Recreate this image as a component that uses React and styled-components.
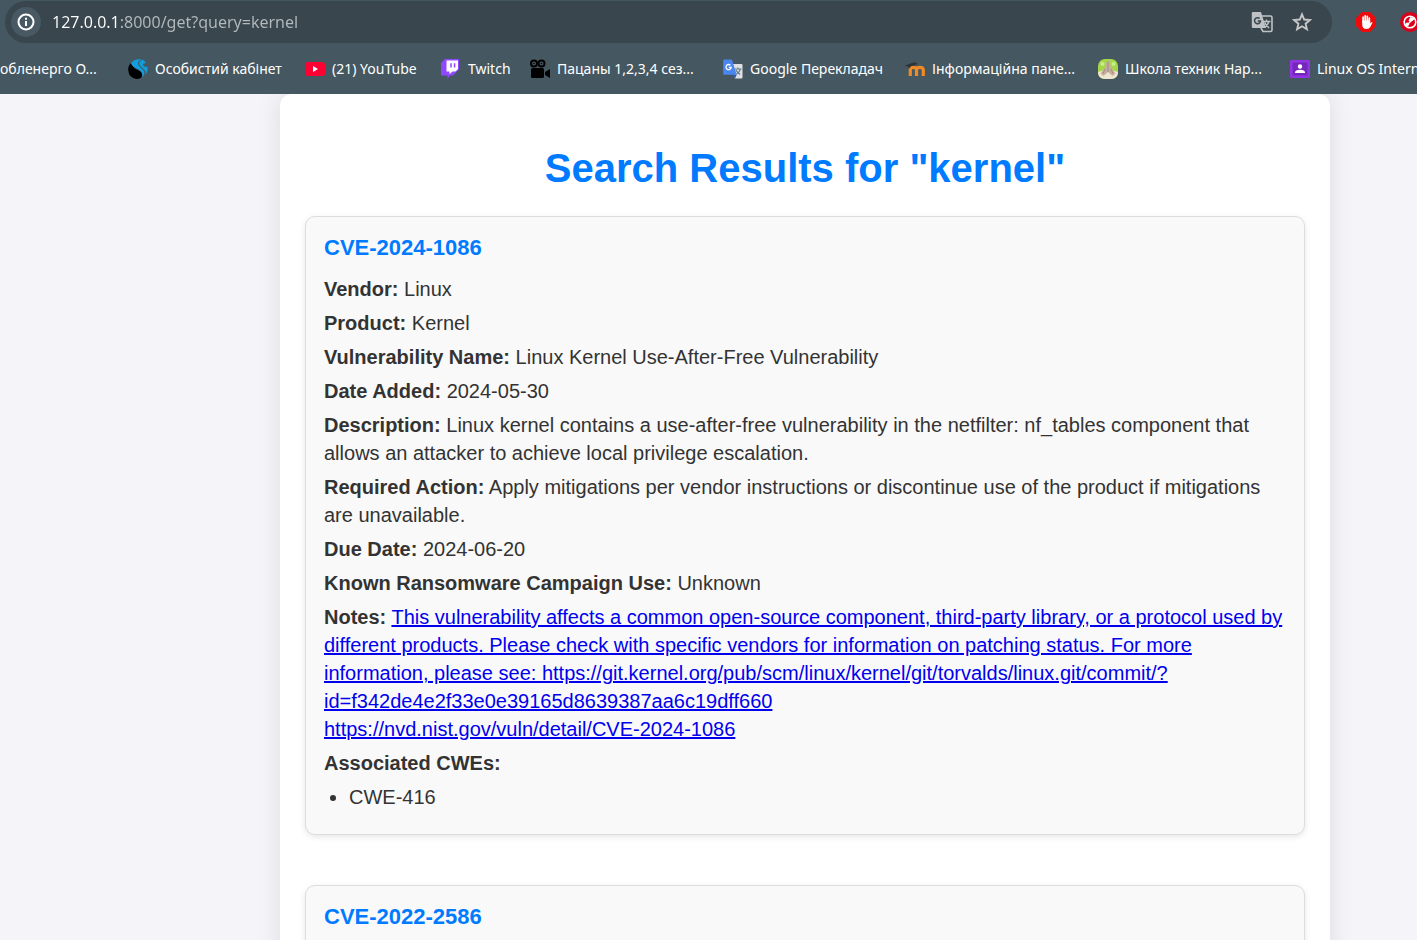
import React from "react";
import styled, { createGlobalStyle } from "styled-components";

const GlobalStyle = createGlobalStyle`
  * { box-sizing: border-box; }
  html { height: 100%; }
  body {
    margin: 0;
    height: 100%;
    overflow: hidden;
    background: #f4f4f9;
    color: #333;
    font-family: Arial, "Liberation Sans", sans-serif;
  }
  #root { height: 100%; }
`;

const Browser = styled.div`
  display: flex;
  flex-direction: column;
  height: 100%;
`;

const Chrome = styled.header`
  flex: none;
  height: 94px;
  background: #455760;
  color: #fff;
  font-family: "Segoe UI", "Noto Sans", sans-serif;
  overflow: hidden;
`;

const AddressRow = styled.div`
  display: flex;
  align-items: center;
  padding: 1px 0 0 5px;
  height: 43px;
`;

const AddressBar = styled.form`
  flex: 1;
  display: flex;
  align-items: center;
  height: 42px;
  padding: 0 10px 0 6px;
  border-radius: 21px;
  background: #39464d;
`;

const IconButton = styled.button`
  display: flex;
  align-items: center;
  justify-content: center;
  flex: none;
  width: ${(p) => p.$size || 40}px;
  height: ${(p) => p.$size || 40}px;
  padding: 0;
  border: 0;
  border-radius: 50%;
  background: ${(p) => (p.$filled ? "#485963" : "transparent")};
  color: ${(p) => (p.$filled ? "#fff" : "#c7c7c7")};
`;

const AddressInput = styled.input`
  flex: 1;
  min-width: 0;
  height: 30px;
  margin-left: 11px;
  padding: 0;
  border: 0;
  outline: 0;
  font-family: inherit;
  font-size: 16px;
  line-height: 30px;
  background: linear-gradient(to right, #fff 67px, #b3babd 67px);
  background-clip: text;
  -webkit-background-clip: text;
  color: transparent;
`;

const Extensions = styled.div`
  display: flex;
  flex: none;
  gap: 4px;
  width: 85px;
  padding-left: 14px;
  overflow: hidden;
`;

const Bookmarks = styled.nav`
  display: flex;
  align-items: center;
  height: 51px;
  overflow: hidden;
`;

const Bookmark = styled.a`
  display: flex;
  flex: none;
  align-items: center;
  gap: 7px;
  width: ${(p) => p.$width}px;
  color: #fff;
  font-size: 14px;
  line-height: 20px;
  white-space: nowrap;
  text-decoration: none;

  svg { flex: none; }
`;

const Page = styled.main`
  flex: 1;
  min-height: 0;
  overflow: hidden;
  padding: 0 87px 0 280px;
`;

const Container = styled.div`
  padding: 44px 25px;
  border-radius: 12px;
  background: #fff;
  box-shadow: 0 0 25px rgba(0, 0, 0, 0.1);
`;

const Title = styled.h1`
  margin: 0 0 18px;
  color: #007bff;
  font-size: 40px;
  line-height: 60px;
  text-align: center;
`;

const Card = styled.article`
  margin-bottom: 50px;
  padding: 17px 18px 23px;
  border: 1px solid #ddd;
  border-radius: 10px;
  background: #f9f9f9;
  box-shadow: 0 2px 6px rgba(0, 0, 0, 0.1);
`;

const CardTitle = styled.h2`
  margin: 0 0 13px;
  color: #007bff;
  font-size: 22px;
  line-height: 28px;
`;

const Field = styled.p`
  margin: 0 0 6px;
  font-size: 20px;
  line-height: 28px;
`;

const NotesLink = styled.a`
  color: #0000ee;
  white-space: pre-line;
`;

const CweList = styled.ul`
  margin: 0;
  padding-left: 25px;
  font-size: 20px;
  line-height: 28px;
`;

const InfoIcon = () => (
  <svg width="18" height="18" viewBox="0 0 18 18" fill="none" stroke="currentColor" strokeWidth="2">
    <circle cx="9" cy="9" r="7.5" />
    <path d="M9 8v5M9 4.7v2" />
  </svg>
);

const TranslateIcon = () => (
  <svg width="22" height="22" viewBox="0 0 22 22">
    <path d="M2 1h8l5 16H2q-1.200 0-1.200-1.200V2.200Q.8 1 2 1Z" fill="#bfc2c4" />
    <path d="M11 5h8.500q1.500 0 1.500 1.500v12.500q0 1.500-1.500 1.500H12l-2-3.500" fill="none" stroke="#bfc2c4" strokeWidth="1.600" />
    <path d="M12 10.500h7.500M15.500 8.500v2M18 10.500q-1.500 4-4.500 6M13.700 11.500q1.500 3 4.500 5.500" fill="none" stroke="#bfc2c4" strokeWidth="1.400" />
    <path d="M8.700 7.600a3 3 0 1 0 .8 2.500H6.600" fill="none" stroke="#39464d" strokeWidth="1.500" />
  </svg>
);

const StarIcon = () => (
  <svg width="20" height="20" viewBox="0 0 20 20" fill="none" stroke="#c7c7c7" strokeWidth="1.900">
    <path d="M10 2.300l2.200 5.200 5.700.5-4.300 3.700 1.300 5.600-4.900-3-4.900 3 1.300-5.600L2.100 8l5.700-.5Z" />
  </svg>
);

const StopHandIcon = () => (
  <svg width="20" height="20" viewBox="0 0 20 20">
    <path d="M6 0h8l6 6v8l-6 6H6l-6-6V6Z" fill="#ed0b0b" />
    <path d="M7.100 10V5.200M9.200 9V3.800M11.300 9V4.300M13.300 10V6" stroke="#fff" strokeWidth="1.700" strokeLinecap="round" />
    <path d="M6.200 8.500h8v3l1-1.200q1-.8 1.300.1l-2.200 4.600q-1 2-3.700 2-4.400 0-4.400-4.500Z" fill="#fff" />
  </svg>
);

const BlockerIcon = () => (
  <svg width="20" height="20" viewBox="0 0 20 20">
    <circle cx="10" cy="10" r="10" fill="#d9001b" />
    <circle cx="10" cy="10" r="5.800" fill="#d9001b" stroke="#fff" strokeWidth="1.600" />
    <path d="M8.500 8.500l2-3.500 4.500 1.500-2.500 2.500-2.500 1Z" fill="#fff" />
    <path d="M6 14L11 9" stroke="#fff" strokeWidth="1.200" />
    <circle cx="7.300" cy="12.300" r="1.800" fill="#fff" />
  </svg>
);

const SwirlIcon = () => (
  <svg width="20" height="20" viewBox="0 0 20 20">
    <path d="M3 4Q0 6.500.2 11 .8 19 8.500 20q5.500 0 5.700-4.300-.2-2.700-4.200-4.700-5.500-2.500-7-7Z" fill="#000" />
    <path d="M3 4.200Q6 .3 11 .2l3 .4Q9.500 2 10 5q.6 2.500 3.500 4.500 4.500 3.500 2 7.500-.6.800-1.200 1.200Q15.500 13 10 10.300 4 7.500 3 4.200Z" fill="#109fdc" />
    <path d="M14.800.7q-4.300 1.600-3.500 4.600.7 2 3.700 4.200 3.800 3 2.200 6.500 3.500-4 2-8.700-2 1.500-4-.8Q14 4 18 4.200 16.800 1.700 14.800.7Z" fill="#109fdc" />
  </svg>
);

const YouTubeIcon = () => (
  <svg width="20" height="20" viewBox="0 0 20 20">
    <rect y="3" width="20" height="14" rx="3" fill="#ff0033" />
    <path d="M8 7l5 3-5 3Z" fill="#fff" />
  </svg>
);

const TwitchIcon = () => (
  <svg width="20" height="20" viewBox="0 0 20 20">
    <path d="M4 0h14v10.500l-6 6h-3L6.500 20v-3.500H0V4Z" fill="#9146ff" />
    <path d="M5.500 1.500h11.500V10L14.500 12.500h-3L8.500 15.300v-2.800h-3Z" fill="#fff" />
    <path d="M10 4.200v4.300M13.600 4.200v4.300" stroke="#9146ff" strokeWidth="1.500" />
  </svg>
);

const CameraIcon = () => (
  <svg width="20" height="20" viewBox="0 0 20 20">
    <rect x="1" y="9" width="13" height="10" rx="1.500" />
    <path d="M15 13l5-3v9l-5-3Z" />
    <g fill="none" stroke="#000" strokeWidth="2">
      <circle cx="4" cy="4.500" r="3" />
      <circle cx="11.500" cy="4.500" r="3" />
    </g>
    <circle cx="4" cy="4.500" r=".8" />
    <circle cx="11.500" cy="4.500" r=".8" />
  </svg>
);

const GoogleTranslateIcon = () => (
  <svg width="20" height="20" viewBox="0 0 20 20">
    <path d="M8 5h10.500q1 0 1 1v12.500q0 1-1 1H12Z" fill="#dfe1e3" />
    <path d="M1.300.5h7.500l5 15.200H1.300Q.2 15.700.2 14.700V1.500Q.2.5 1.300.5Z" fill="#4a86f0" />
    <path d="M10.500 15.700h3.300L12 19.500Z" fill="#2559bd" />
    <path d="M11.500 10h7M15 8.500V10M17.500 10q-1.200 3.500-4 5.200M13 11q1.400 3 4.200 4.500" fill="none" stroke="#627d87" strokeWidth="1.200" />
    <path d="M7.400 6.200A2.600 2.600 0 1 0 8.200 8.300H5.800" fill="none" stroke="#fff" strokeWidth="1.300" />
  </svg>
);

const MoodleIcon = () => (
  <svg width="20" height="20" viewBox="0 0 20 20">
    <path d="M5.300 17v-6q0-2.700 3.100-2.700t3.100 2.700v6M11.500 11q0-2.700 3.400-2.700T18.300 11v6" fill="none" stroke="#f08a24" strokeWidth="3.200" />
    <path d="M0 6.500l9-3.300 3.500 1-3 2.300Q5.500 6.300 4.500 9.500L3 7.500l-2 .3Z" fill="#303437" />
    <path d="M1.200 7Q.2 9.500 1 13.500" fill="none" stroke="#555" />
  </svg>
);

const SchoolIcon = () => (
  <svg width="20" height="20" viewBox="0 0 20 20">
    <rect width="20" height="20" rx="7" fill="#a5d64c" />
    <path d="M0 13q10-4 20 0 0 7-7 7H7q-7 0-7-7Z" fill="#efe6cf" />
    <path d="M9.500 1.500Q7.500 5 7 9L2.500 14.500l3 2.500L10 13l4.500 4 3-2.500L13 9Q12.500 4.500 10.500 1.500Z" fill="#c9afa2" />
    <path d="M10 2.500V13M7 10l-2 4.500M13 10l2 4.500" stroke="#8d7b72" strokeWidth=".7" />
    <circle cx="4.500" cy="5" r="2" fill="#c9ed86" />
    <circle cx="15.500" cy="5" r="2" fill="#c9ed86" />
  </svg>
);

const ClassroomIcon = () => (
  <svg width="20" height="20" viewBox="0 0 20 20">
    <rect y="1" width="20" height="18" rx="1.500" fill="#9334e6" />
    <rect x="2.500" y="3.500" width="15" height="13" fill="#7627bb" />
    <circle cx="10" cy="7.500" r="2.200" fill="#fff" />
    <path d="M5 14v-1.200Q6 10.700 10 10.700t5 2.100V14Z" fill="#fff" />
  </svg>
);

const bookmarks = [
  { label: "обленерго О...", width: 128 },
  { label: "Особистий кабінет", width: 177, Icon: SwirlIcon },
  { label: "(21) YouTube", width: 136, Icon: YouTubeIcon },
  { label: "Twitch", width: 89, Icon: TwitchIcon },
  { label: "Пацаны 1,2,3,4 сез...", width: 193, Icon: CameraIcon },
  { label: "Google Перекладач", width: 182, Icon: GoogleTranslateIcon },
  { label: "Інформаційна пане...", width: 193, Icon: MoodleIcon },
  { label: "Школа техник Нар...", width: 192, Icon: SchoolIcon },
  { label: "Linux OS Internals", width: 192, Icon: ClassroomIcon },
];

const results = [
  {
    id: "CVE-2024-1086",
    fields: [
      ["Vendor", "Linux"],
      ["Product", "Kernel"],
      ["Vulnerability Name", "Linux Kernel Use-After-Free Vulnerability"],
      ["Date Added", "2024-05-30"],
      ["Description", "Linux kernel contains a use-after-free vulnerability in the netfilter: nf_tables component that allows an attacker to achieve local privilege escalation."],
      ["Required Action", "Apply mitigations per vendor instructions or discontinue use of the product if mitigations are unavailable."],
      ["Due Date", "2024-06-20"],
      ["Known Ransomware Campaign Use", "Unknown"],
    ],
    notes: "This vulnerability affects a common open-source component, third-party library, or a protocol used by different products. Please check with specific vendors for information on patching status. For more information, please see: https://git.kernel.org/pub/scm/linux/kernel/git/torvalds/linux.git/commit/?id=f342de4e2f33e0e39165d8639387aa6c19dff660\nhttps://nvd.nist.gov/vuln/detail/CVE-2024-1086",
    cwes: ["CWE-416"],
  },
  { id: "CVE-2022-2586", fields: [["Vendor", "Linux"], ["Product", "Kernel"]] },
];

function Result({ id, fields, notes, cwes }) {
  return (
    <Card>
      <CardTitle>{id}</CardTitle>
      {fields.map(([name, value]) => (
        <Field key={name}><strong>{name}:</strong> {value}</Field>
      ))}
      {notes && <Field><strong>Notes:</strong> <NotesLink href="#notes">{notes}</NotesLink></Field>}
      {cwes && (
        <>
          <Field><strong>Associated CWEs:</strong></Field>
          <CweList>{cwes.map((cwe) => <li key={cwe}>{cwe}</li>)}</CweList>
        </>
      )}
    </Card>
  );
}

export default function App() {
  return (
    <Browser>
      <GlobalStyle />
      <Chrome>
        <AddressRow>
          <AddressBar onSubmit={(e) => e.preventDefault()}>
            <IconButton type="button" $size={30} $filled aria-label="Site information"><InfoIcon /></IconButton>
            <AddressInput aria-label="Address" defaultValue="127.0.0.1:8000/get?query=kernel" spellCheck={false} />
            <IconButton type="button" aria-label="Translate this page"><TranslateIcon /></IconButton>
            <IconButton type="button" aria-label="Bookmark this page"><StarIcon /></IconButton>
          </AddressBar>
          <Extensions>
            <IconButton type="button" aria-label="Ad blocker"><StopHandIcon /></IconButton>
            <IconButton type="button" aria-label="Tracker blocker"><BlockerIcon /></IconButton>
          </Extensions>
        </AddressRow>
        <Bookmarks aria-label="Bookmarks">
          {bookmarks.map(({ label, width, Icon }) => (
            <Bookmark key={label} href="#bookmark" $width={width}>
              {Icon && <Icon />}
              {label}
            </Bookmark>
          ))}
        </Bookmarks>
      </Chrome>
      <Page>
        <Container>
          <Title>Search Results for "kernel"</Title>
          {results.map((result) => <Result key={result.id} {...result} />)}
        </Container>
      </Page>
    </Browser>
  );
}
